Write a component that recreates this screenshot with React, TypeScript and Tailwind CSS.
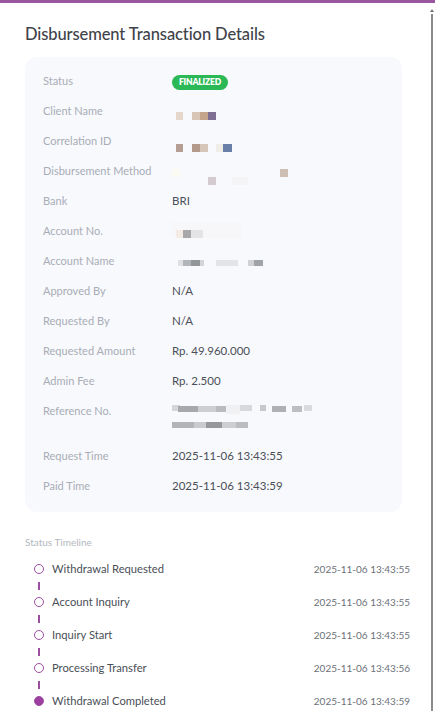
import React from "react";

type Block = [number, number, string];

function Pix({ blocks, top = 0, h = 8 }: { blocks: Block[]; top?: number; h?: number }) {
  return (
    <div className="relative h-[20px] w-[160px]">
      {blocks.map((b, i) => (
        <span
          key={i}
          className="absolute block"
          style={{ left: b[0], width: b[1], top, height: h, backgroundColor: b[2] }}
        />
      ))}
    </div>
  );
}

const rows: { label: string; value?: string; node?: React.ReactNode }[] = [
  {
    label: "Status",
    node: (
      <span className="mt-[2px] inline-flex h-[15px] items-center rounded-full bg-[#2bb856] px-[7px] text-[8.5px] font-extrabold leading-none tracking-[-0.2px] text-white">
        FINALIZED
      </span>
    ),
  },
  {
    label: "Client Name",
    node: (
      <Pix
        top={11}
        blocks={[
          [4, 7, "#e6d7cc"],
          [20, 8, "#d8c5b6"],
          [28, 8, "#c5a58c"],
          [36, 8, "#7f6f93"],
        ]}
      />
    ),
  },
  {
    label: "Correlation ID",
    node: (
      <Pix
        top={13}
        blocks={[
          [4, 7, "#b59e94"],
          [20, 8, "#b49a8a"],
          [28, 8, "#d6c5b9"],
          [44, 7, "#f0ece8"],
          [51, 9, "#6a7fa8"],
        ]}
      />
    ),
  },
  {
    label: "Disbursement Method",
    node: (
      <div className="relative h-[20px] w-[160px]">
        <span className="absolute left-[0px] top-[8px] block h-[8px] w-[8px] bg-[#fbfaf3]" />
        <span className="absolute left-[36px] top-[16px] block h-[8px] w-[8px] bg-[#d3cbcf]" />
        <span className="absolute left-[60px] top-[16px] block h-[8px] w-[16px] bg-[#f4f3f6]" />
        <span className="absolute left-[108px] top-[8px] block h-[8px] w-[8px] bg-[#cdbfb3]" />
      </div>
    ),
  },
  { label: "Bank", value: "BRI" },
  {
    label: "Account No.",
    node: (
      <div className="relative h-[20px] w-[160px]">
        <span className="absolute left-[0px] top-[1px] block h-[16px] w-[70px] bg-[#f7f6f8]" />
        <span className="absolute left-[4px] top-[9px] block h-[8px] w-[7px] bg-[#f3ebe4]" />
        <span className="absolute left-[11px] top-[9px] block h-[8px] w-[8px] bg-[#a8a8aa]" />
        <span className="absolute left-[19px] top-[9px] block h-[8px] w-[12px] bg-[#e4e4e7]" />
      </div>
    ),
  },
  {
    label: "Account Name",
    node: (
      <Pix
        top={9}
        h={6}
        blocks={[
          [6, 5, "#dfe0e3"],
          [11, 8, "#b1b4b8"],
          [19, 9, "#939699"],
          [28, 4, "#d3d5d8"],
          [44, 22, "#e3e4e7"],
          [76, 6, "#cfd1d4"],
          [82, 9, "#a0a3a8"],
        ]}
      />
    ),
  },
  { label: "Approved By", value: "N/A" },
  { label: "Requested By", value: "N/A" },
  { label: "Requested Amount", value: "Rp. 49.960.000" },
  { label: "Admin Fee", value: "Rp. 2.500" },
  {
    label: "Reference No.",
    node: (
      <div className="relative h-[36px] w-[160px]">
        {[
          [0, 8, "#d5d6d9", 4, 6],
          [6, 20, "#a6a8ac", 5, 6],
          [26, 18, "#cdced1", 5, 6],
          [44, 10, "#b9bbbe", 5, 6],
          [54, 14, "#f1f1f3", 4, 9],
          [68, 12, "#d8d9dc", 4, 6],
          [88, 6, "#c6c8cb", 4, 6],
          [100, 14, "#aeb0b3", 5, 6],
          [120, 10, "#bcbec1", 5, 6],
          [132, 8, "#dadbde", 4, 6],
          [0, 22, "#b2b4b7", 21, 6],
          [22, 12, "#cacbce", 21, 6],
          [34, 16, "#96989c", 21, 6],
          [50, 14, "#ccced1", 21, 6],
          [64, 12, "#babcbf", 21, 6],
        ].map((b, i) => (
          <span
            key={i}
            className="absolute block"
            style={{
              left: b[0] as number,
              width: b[1] as number,
              backgroundColor: b[2] as string,
              top: b[3] as number,
              height: b[4] as number,
            }}
          />
        ))}
      </div>
    ),
  },
  { label: "Request Time", value: "2025-11-06 13:43:55" },
  { label: "Paid Time", value: "2025-11-06 13:43:59" },
];

const timeline = [
  { label: "Withdrawal Requested", time: "2025-11-06 13:43:55", done: false },
  { label: "Account Inquiry", time: "2025-11-06 13:43:55", done: false },
  { label: "Inquiry Start", time: "2025-11-06 13:43:55", done: false },
  { label: "Processing Transfer", time: "2025-11-06 13:43:56", done: false },
  { label: "Withdrawal Completed", time: "2025-11-06 13:43:59", done: true },
];

export default function App() {
  return (
    <div
      className="relative h-[725px] w-[435px] overflow-hidden bg-white"
      style={{ fontFamily: "Lato, 'Noto Sans', sans-serif" }}
    >
      <div className="h-[3px] w-full bg-[#9a55a0]" />
      <div className="px-[25px] pt-[21px]">
        <h1 className="text-[16.5px] font-medium leading-[20px] tracking-[-0.1px] text-[#3f4349]">
          Disbursement Transaction Details
        </h1>

        <div className="mt-[13px] w-[377px] rounded-[12px] bg-[#f8f9fd] px-[18px] pb-[6px] pt-[14px]">
          {rows.map((r) => (
            <div
              key={r.label}
              className={`flex items-start ${r.label === "Reference No." ? "h-[45px]" : "h-[30px]"}`}
            >
              <div className="w-[129px] text-[11px] leading-[20px] text-[#a8adb6]">{r.label}</div>
              <div className="text-[11.5px] leading-[20px] text-[#4a4f57]">{r.node ?? r.value}</div>
            </div>
          ))}
        </div>

        <div className="mt-[23px] text-[10px] leading-[14px] text-[#b3b7be]">Status Timeline</div>

        <div className="mt-[13px] flex flex-col">
          {timeline.map((t, i) => (
            <div key={t.label} className="flex flex-col">
              <div className="flex h-[14px] items-center">
                <div className="flex w-[27px] justify-center">
                  <span
                    className={`block h-[10px] w-[10px] rounded-full border-[1.5px] border-[#9c4fa0] ${
                      t.done ? "bg-[#9c3fa0]" : "bg-white"
                    }`}
                  />
                </div>
                <div className="flex-1 text-[11.2px] text-[#4a4f57]">{t.label}</div>
                <div className="w-[110px] text-right text-[10px] text-[#6d7178]">{t.time}</div>
              </div>
              {i < timeline.length - 1 && (
                <div className="flex h-[19px] w-[27px] items-center justify-center">
                  <span className="block h-[8px] w-[2px] bg-[#9c4fa0]" />
                </div>
              )}
            </div>
          ))}
        </div>
      </div>

      <div className="absolute right-[1px] top-[9px] flex flex-col items-center">
        <span className="block h-0 w-0 border-x-[2px] border-b-[3px] border-x-transparent border-b-[#777]" />
        <span className="mt-[2px] block h-[697px] w-[1.5px] bg-[#8c8c8c]" />
      </div>
    </div>
  );
}
